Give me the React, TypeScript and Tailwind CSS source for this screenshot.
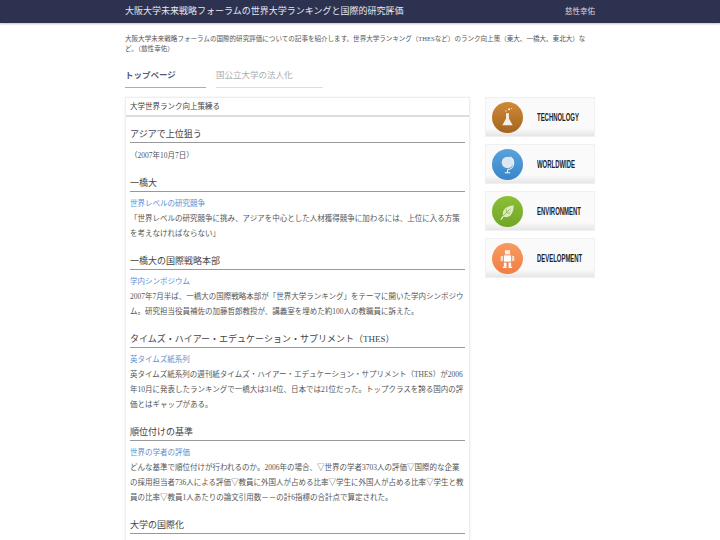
const font = { fontFamily: '"Liberation Serif", "Noto Sans CJK JP", sans-serif' };

function Flask() {
  return (
    <svg viewBox="0 0 30 30" className="w-[31px] h-[31px] shrink-0">
      <defs><linearGradient id="g1" x1="0" y1="0" x2="0" y2="1"><stop offset="0" stopColor="#cf8a38" /><stop offset="1" stopColor="#a4651e" /></linearGradient></defs>
      <circle cx="15" cy="15" r="15" fill="url(#g1)" />
      <path d="M13.600 11h2.800v5l3.600 6.500h-10l3.600-6.500z" fill="#f6efe4" />
      <circle cx="16.500" cy="7" r=".9" fill="#fff" /><circle cx="13.500" cy="8.600" r=".6" fill="#fff" /><circle cx="19" cy="6.400" r=".5" fill="#fff" />
    </svg>
  );
}
function Globe() {
  return (
    <svg viewBox="0 0 30 30" className="w-[31px] h-[31px] shrink-0">
      <defs><linearGradient id="g2" x1="0" y1="0" x2="0" y2="1"><stop offset="0" stopColor="#58a3dc" /><stop offset="1" stopColor="#3a85c8" /></linearGradient></defs>
      <circle cx="15" cy="15" r="15" fill="url(#g2)" />
      <circle cx="15" cy="13" r="5.600" fill="#dbe7f1" />
      <path d="M17.500 7.500a7 7 0 0 1 1.500 11 7 7 0 0 1-4 1.500M15 20v2.600M12.400 23h5.200" stroke="#f2f6fa" strokeWidth="1" fill="none" />
    </svg>
  );
}
function Leaf() {
  return (
    <svg viewBox="0 0 30 30" className="w-[31px] h-[31px] shrink-0">
      <defs><linearGradient id="g3" x1="0" y1="0" x2="0" y2="1"><stop offset="0" stopColor="#8cc038" /><stop offset="1" stopColor="#71a526" /></linearGradient></defs>
      <circle cx="15" cy="15" r="15" fill="url(#g3)" />
      <path d="M11 20c-2-6 2-10 10-11 0 7-3 13-10 11z" fill="#dcebc3" />
      <path d="M8.500 23c2.500-4.500 5.500-7.500 9.500-10.500M14 16v-3M14.500 16.500h3" stroke="#8aba3f" strokeWidth=".8" fill="none" />
      <path d="M8.500 23l2.500-3.500" stroke="#f3f8e8" strokeWidth="1" />
    </svg>
  );
}
function Robot() {
  return (
    <svg viewBox="0 0 30 30" className="w-[31px] h-[31px] shrink-0">
      <defs><linearGradient id="g4" x1="0" y1="0" x2="0" y2="1"><stop offset="0" stopColor="#f79a62" /><stop offset="1" stopColor="#f07f45" /></linearGradient></defs>
      <circle cx="15" cy="15" r="15" fill="url(#g4)" />
      <rect x="12.500" y="7" width="5" height="4" fill="#fbeee5" />
      <rect x="11.500" y="12" width="7" height="6" fill="#fff" />
      <rect x="8.500" y="12.500" width="2" height="5" fill="#fbe3d4" />
      <rect x="19.500" y="12.500" width="2" height="5" fill="#fbe3d4" />
      <rect x="11.500" y="19" width="2.500" height="4" fill="#fff" />
      <rect x="16" y="19" width="2.500" height="4" fill="#fff" />
      <rect x="10.500" y="23" width="3.500" height="1.200" fill="#fff" />
      <rect x="16" y="23" width="3.500" height="1.200" fill="#fff" />
    </svg>
  );
}

function Card({ icon, label }: { icon: React.ReactNode; label: string }) {
  return (
    <div className="h-10 border border-[#f0f0f0] bg-gradient-to-b from-[#fafafa] from-80% to-[#e6e6e6] flex items-center pl-[6px]">
      {icon}
      <span className="ml-[14px] text-[11px] font-bold text-[#222] leading-none whitespace-nowrap origin-left scale-x-[0.54]" style={{ fontFamily: '"Liberation Sans", sans-serif' }}>{label}</span>
    </div>
  );
}

function H({ children }: { children: React.ReactNode }) {
  return <h2 className="text-[9px] leading-[14px] text-[#444] border-b border-[#999] pb-[1px] mb-[3.5px]">{children}</h2>;
}
function Lnk({ children }: { children: React.ReactNode }) {
  return <p className="text-[7.5px] leading-[15px] text-[#5b8fd0]">{children}</p>;
}
function P({ children }: { children: React.ReactNode }) {
  return <p className="text-[7.5px] leading-[15px] text-[#555]">{children}</p>;
}
function Gap() {
  return <div className="h-[13.5px]" />;
}

export default function App() {
  return (
    <div className="h-[540px] overflow-hidden bg-white" style={font}>
      <header className="h-[23px] bg-[#2d3250] shadow-[0_1px_2px_rgba(0,0,0,0.25)]">
        <div className="w-[470px] mx-auto flex justify-between items-center h-full">
          <span className="text-[9px] text-[#e8e8ee]">大阪大学未来戦略フォーラムの世界大学ランキングと国際的研究評価</span>
          <span className="text-[7.5px] text-[#d8d8e0]">慈性幸佑</span>
        </div>
      </header>
      <div className="w-[470px] mx-auto">
        <p className="pt-[11px] text-[6.55px] leading-[10px] text-[#555]">大阪大学未来戦略フォーラムの国際的研究評価についての記事を紹介します。世界大学ランキング（THESなど）のランク向上策（東大、一橋大、東北大）など。（慈性幸佑）</p>
        <nav className="mt-[7px] flex gap-[10px] text-[8.5px] leading-[14px]">
          <div className="w-[81px] h-[27px] pt-[7px] border-b border-[#aaaab8] font-bold text-[#555a75]">トップページ</div>
          <div className="w-[107px] h-[27px] pt-[7px] border-b border-[#ddd] text-[#aaa]">国公立大学の法人化</div>
        </nav>
        <div className="mt-[9px] flex gap-[15px] items-start">
          <main className="w-[345px] border border-[#eee] shadow-[0_0_2px_rgba(0,0,0,0.08)]">
            <div className="h-[19px] border-b-2 border-[#ddd] px-[4px] text-[7.5px] leading-[17px] text-[#444]">大学世界ランク向上策練る</div>
            <div className="px-[4px] pt-[10px] pb-[40px]">
              <H>アジアで上位狙う</H>
              <div className="pt-[1px]"><P>（2007年10月7日）</P></div>
              <Gap />
              <H>一橋大</H>
              <Lnk>世界レベルの研究競争</Lnk>
              <P>「世界レベルの研究競争に挑み、アジアを中心とした人材獲得競争に加わるには、上位に入る方策を考えなければならない」</P>
              <Gap />
              <H>一橋大の国際戦略本部</H>
              <Lnk>学内シンポジウム</Lnk>
              <P>2007年7月半ば、一橋大の国際戦略本部が「世界大学ランキング」をテーマに開いた学内シンポジウム。研究担当役員補佐の加藤哲郎教授が、講義室を埋めた約100人の教職員に訴えた。</P>
              <Gap />
              <H>タイムズ・ハイアー・エデュケーション・サプリメント（THES）</H>
              <Lnk>英タイムズ紙系列</Lnk>
              <P>英タイムズ紙系列の週刊紙タイムズ・ハイアー・エデュケーション・サプリメント（THES）が2006年10月に発表したランキングで一橋大は314位、日本では21位だった。トップクラスを誇る国内の評価とはギャップがある。</P>
              <Gap />
              <H>順位付けの基準</H>
              <Lnk>世界の学者の評価</Lnk>
              <P>どんな基準で順位付けが行われるのか。2006年の場合、▽世界の学者3703人の評価▽国際的な企業の採用担当者736人による評価▽教員に外国人が占める比率▽学生に外国人が占める比率▽学生と教員の比率▽教員1人あたりの論文引用数－－の計6指標の合計点で算定された。</P>
              <Gap />
              <H>大学の国際化</H>
            </div>
          </main>
          <aside className="w-[110px] flex flex-col gap-[7px]">
            <Card icon={<Flask />} label="TECHNOLOGY" />
            <Card icon={<Globe />} label="WORLDWIDE" />
            <Card icon={<Leaf />} label="ENVIRONMENT" />
            <Card icon={<Robot />} label="DEVELOPMENT" />
          </aside>
        </div>
      </div>
    </div>
  );
}
